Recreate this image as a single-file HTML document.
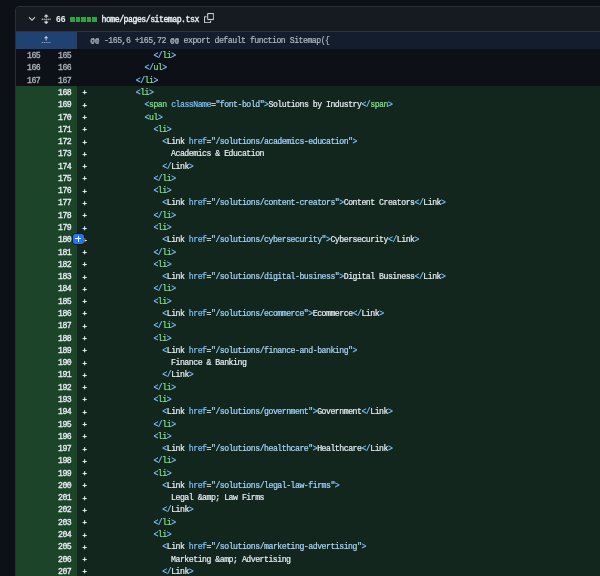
<!DOCTYPE html>
<html><head><meta charset="utf-8"><style>
html,body{margin:0;padding:0;}
body{width:600px;height:576px;overflow:hidden;background:#0d1117;position:relative;font-family:"Liberation Mono",monospace;}
.wrap{position:absolute;left:0;top:0;width:600px;height:576px;will-change:transform;overflow:hidden;}
.mono{font-size:8.2px;letter-spacing:-0.49px;-webkit-text-stroke:0.2px currentColor;}
.box{position:absolute;left:15px;top:6px;width:620px;height:620px;border:1px solid #2b3037;border-radius:4px;background:#0d1117;overflow:hidden;}
.hdr{position:absolute;left:16px;top:7px;width:600px;height:24px;background:#161b22;border-top-left-radius:3px;}
.hline{position:absolute;left:16px;top:31px;width:600px;height:1px;background:#30363d;}
.ico{position:absolute;width:9.82px;height:9.82px;}
.num66{position:absolute;left:56px;top:13px;height:12px;line-height:12px;font-family:"Liberation Sans",sans-serif;font-weight:bold;font-size:8.6px;color:#e6edf3;}
.sq{position:absolute;top:16.5px;width:4.8px;height:5px;background:#2ba441;}
.fname{position:absolute;left:101.5px;top:14.2px;height:12px;line-height:12px;font-size:8.2px;letter-spacing:-0.49px;-webkit-text-stroke:0.4px currentColor;color:#e6edf3;white-space:pre;}
.at{font-size:7px;letter-spacing:0.23px;}
.hunkg{position:absolute;left:16px;top:32px;width:61.4px;height:17.1px;background:#1f4273;}
.hunkc{position:absolute;left:77.4px;top:32px;width:600px;height:17.1px;background:#131d2e;}
.hunkt{position:absolute;left:90.6px;top:32.4px;height:17.1px;line-height:17.1px;font-size:8.2px;letter-spacing:-0.49px;-webkit-text-stroke:0.2px currentColor;color:#b1b8c0;white-space:pre;}
.row{position:absolute;left:16px;width:600px;height:12.28px;line-height:12.28px;font-size:8.2px;letter-spacing:-0.49px;-webkit-text-stroke:0.2px currentColor;white-space:pre;transform:translateY(1.0px);}
.row .n1,.row .n2{position:absolute;top:0;height:12.28px;text-align:right;-webkit-text-stroke:0.35px currentColor;}
.row .n1{left:0;width:24.3px;}
.row .n2{left:30.7px;width:24.6px;}
.row .code{position:absolute;left:61.4px;top:0;width:540px;height:12.28px;padding-left:14.1px;box-sizing:border-box;color:#e6edf3;}
.ctx{}
.ctx .n1,.ctx .n2{color:#aab1b9;}
.add .g{display:none;}
.addg{position:absolute;left:16px;top:85.94px;width:61.4px;height:500px;background:#1c4428;}
.addc{position:absolute;left:77.4px;top:85.94px;width:600px;height:500px;background:#12261e;}
.add .n2{color:#e6edf3;}

.mk{position:absolute;left:5.2px;top:0.5px;font-size:7.2px;color:#e6edf3;-webkit-text-stroke:0.45px currentColor;}
.p{color:#79c0ff;}
.t{color:#7ee787;}
.c{color:#e6edf3;}
.a{color:#79c0ff;}
.s{color:#a5d6ff;}
.plusbtn{position:absolute;left:72.7px;top:233.6px;width:11px;height:10.9px;border-radius:2.5px;background:#2476f0;box-shadow:0 0 0 0.8px rgba(5,10,8,0.7);}
.plusbtn:before{content:"";position:absolute;left:2.5px;top:4.8px;width:5.8px;height:0.9px;background:#fff;}
.plusbtn:after{content:"";position:absolute;left:4.95px;top:2.35px;width:0.9px;height:5.8px;background:#fff;}
</style></head><body>
<div class="wrap">
<div class="box"></div>
<div class="hdr"></div>
<div class="hline"></div>
<svg class="ico" style="left:26.9px;top:13.6px;width:10px;height:10px" viewBox="0 0 16 16"><path fill="#d1d7e0" stroke="#d1d7e0" stroke-width="0.3" d="M12.78 5.22a.749.749 0 0 1 0 1.06l-4.25 4.25a.749.749 0 0 1-1.06 0L3.22 6.28a.749.749 0 0 1 .326-1.275.749.749 0 0 1 .734.215L8 8.939l3.72-3.719a.749.749 0 0 1 1.06 0Z"/></svg>
<svg class="ico" style="left:41.1px;top:13.6px;width:10.4px;height:10.4px" viewBox="0 0 16 16"><path fill="#d1d7e0" stroke="#d1d7e0" stroke-width="0.5" d="m8.177.677 2.896 2.896a.25.25 0 0 1-.177.427H8.75v1.25a.75.75 0 0 1-1.5 0V4H5.104a.25.25 0 0 1-.177-.427L7.823.677a.25.25 0 0 1 .354 0ZM7.25 10.75a.75.75 0 0 1 1.5 0V12h2.146a.25.25 0 0 1 .177.427l-2.896 2.896a.25.25 0 0 1-.354 0l-2.896-2.896A.25.25 0 0 1 5.104 12H7.25v-1.25Zm-5-2a.75.75 0 0 0 0-1.5h-.5a.75.75 0 0 0 0 1.5h.5ZM6 8a.75.75 0 0 1-.75.75h-.5a.75.75 0 0 1 0-1.5h.5A.75.75 0 0 1 6 8Zm2.25.75a.75.75 0 0 0 0-1.5h-.5a.75.75 0 0 0 0 1.5h.5ZM12 8a.75.75 0 0 1-.75.75h-.5a.75.75 0 0 1 0-1.5h.5A.75.75 0 0 1 12 8Zm2.25.75a.75.75 0 0 0 0-1.5h-.5a.75.75 0 0 0 0 1.5h.5Z"/></svg>
<div class="num66">66</div>
<div class="sq" style="left:70.1px"></div><div class="sq" style="left:75.6px"></div><div class="sq" style="left:81.1px"></div><div class="sq" style="left:86.6px"></div><div class="sq" style="left:92.1px"></div>
<div class="fname">home/pages/sitemap.tsx</div>
<svg class="ico" style="left:203.8px;top:13.2px;width:10.2px;height:10.2px" viewBox="0 0 16 16"><path fill="#c9d1d9" stroke="#c9d1d9" stroke-width="0.3" d="M0 6.75C0 5.784.784 5 1.75 5h1.5a.75.75 0 0 1 0 1.5h-1.5a.25.25 0 0 0-.25.25v7.5c0 .138.112.25.25.25h7.5a.25.25 0 0 0 .25-.25v-1.5a.75.75 0 0 1 1.5 0v1.5A1.75 1.75 0 0 1 9.25 16h-7.5A1.75 1.75 0 0 1 0 14.25ZM5 1.75C5 .784 5.784 0 6.75 0h7.5C15.216 0 16 .784 16 1.75v7.5A1.75 1.75 0 0 1 14.25 11h-7.5A1.75 1.75 0 0 1 5 9.25Zm1.75-.25a.25.25 0 0 0-.25.25v7.5c0 .138.112.25.25.25h7.5a.25.25 0 0 0 .25-.25v-7.5a.25.25 0 0 0-.25-.25Z"/></svg>
<div class="hunkg"></div>
<div class="hunkc"></div>
<svg class="ico" style="left:41.0px;top:35.0px;width:10.24px;height:10.24px" viewBox="0 0 16 16"><path fill="#c3cad4" d="M7.823 1.677 4.927 4.573A.25.25 0 0 0 5.104 5H7.25v3.236a.75.75 0 1 0 1.5 0V5h2.146a.25.25 0 0 0 .177-.427L8.177 1.677a.25.25 0 0 0-.354 0ZM13.75 11a.75.75 0 0 0 0 1.5h.5a.75.75 0 0 0 0-1.5h-.5Zm-3.75.75a.75.75 0 0 1 .75-.75h.5a.75.75 0 0 1 0 1.5h-.5a.75.75 0 0 1-.75-.75ZM7.75 11a.75.75 0 0 0 0 1.5h.5a.75.75 0 0 0 0-1.5h-.5ZM4 11.75a.75.75 0 0 1 .75-.75h.5a.75.75 0 0 1 0 1.5h-.5a.75.75 0 0 1-.75-.75ZM1.75 11a.75.75 0 0 0 0 1.5h.5a.75.75 0 0 0 0-1.5h-.5Z"/></svg>
<div class="hunkt"><span class="at">@@</span> -165,6 +165,72 <span class="at">@@</span> export default function Sitemap({</div>
<div class="addg"></div><div class="addc"></div>
<div class="row ctx" style="top:49.10px"><div class="n1">165</div><div class="n2">165</div><div class="code">              <span class="p">&lt;/</span><span class="t">li</span><span class="p">&gt;</span></div></div>
<div class="row ctx" style="top:61.38px"><div class="n1">166</div><div class="n2">166</div><div class="code">            <span class="p">&lt;/</span><span class="t">ul</span><span class="p">&gt;</span></div></div>
<div class="row ctx" style="top:73.66px"><div class="n1">167</div><div class="n2">167</div><div class="code">          <span class="p">&lt;/</span><span class="t">li</span><span class="p">&gt;</span></div></div>
<div class="row add" style="top:85.94px"><div class="g"></div><div class="n2">168</div><div class="code"><span class="mk">+</span>          <span class="p">&lt;</span><span class="t">li</span><span class="p">&gt;</span></div></div>
<div class="row add" style="top:98.22px"><div class="g"></div><div class="n2">169</div><div class="code"><span class="mk">+</span>            <span class="p">&lt;</span><span class="t">span</span> <span class="a">className</span>=<span class="s">"font-bold"</span><span class="p">&gt;</span>Solutions by Industry<span class="p">&lt;/</span><span class="t">span</span><span class="p">&gt;</span></div></div>
<div class="row add" style="top:110.50px"><div class="g"></div><div class="n2">170</div><div class="code"><span class="mk">+</span>            <span class="p">&lt;</span><span class="t">ul</span><span class="p">&gt;</span></div></div>
<div class="row add" style="top:122.78px"><div class="g"></div><div class="n2">171</div><div class="code"><span class="mk">+</span>              <span class="p">&lt;</span><span class="t">li</span><span class="p">&gt;</span></div></div>
<div class="row add" style="top:135.06px"><div class="g"></div><div class="n2">172</div><div class="code"><span class="mk">+</span>                <span class="p">&lt;</span><span class="c">Link</span> <span class="a">href</span>=<span class="s">"/solutions/academics-education"</span><span class="p">&gt;</span></div></div>
<div class="row add" style="top:147.34px"><div class="g"></div><div class="n2">173</div><div class="code"><span class="mk">+</span>                  Academics &amp; Education</div></div>
<div class="row add" style="top:159.62px"><div class="g"></div><div class="n2">174</div><div class="code"><span class="mk">+</span>                <span class="p">&lt;/</span><span class="c">Link</span><span class="p">&gt;</span></div></div>
<div class="row add" style="top:171.90px"><div class="g"></div><div class="n2">175</div><div class="code"><span class="mk">+</span>              <span class="p">&lt;/</span><span class="t">li</span><span class="p">&gt;</span></div></div>
<div class="row add" style="top:184.18px"><div class="g"></div><div class="n2">176</div><div class="code"><span class="mk">+</span>              <span class="p">&lt;</span><span class="t">li</span><span class="p">&gt;</span></div></div>
<div class="row add" style="top:196.46px"><div class="g"></div><div class="n2">177</div><div class="code"><span class="mk">+</span>                <span class="p">&lt;</span><span class="c">Link</span> <span class="a">href</span>=<span class="s">"/solutions/content-creators"</span><span class="p">&gt;</span>Content Creators<span class="p">&lt;/</span><span class="c">Link</span><span class="p">&gt;</span></div></div>
<div class="row add" style="top:208.74px"><div class="g"></div><div class="n2">178</div><div class="code"><span class="mk">+</span>              <span class="p">&lt;/</span><span class="t">li</span><span class="p">&gt;</span></div></div>
<div class="row add" style="top:221.02px"><div class="g"></div><div class="n2">179</div><div class="code"><span class="mk">+</span>              <span class="p">&lt;</span><span class="t">li</span><span class="p">&gt;</span></div></div>
<div class="row add" style="top:233.30px"><div class="g"></div><div class="n2">180</div><div class="code"><span class="mk">+</span>                <span class="p">&lt;</span><span class="c">Link</span> <span class="a">href</span>=<span class="s">"/solutions/cybersecurity"</span><span class="p">&gt;</span>Cybersecurity<span class="p">&lt;/</span><span class="c">Link</span><span class="p">&gt;</span></div></div>
<div class="row add" style="top:245.58px"><div class="g"></div><div class="n2">181</div><div class="code"><span class="mk">+</span>              <span class="p">&lt;/</span><span class="t">li</span><span class="p">&gt;</span></div></div>
<div class="row add" style="top:257.86px"><div class="g"></div><div class="n2">182</div><div class="code"><span class="mk">+</span>              <span class="p">&lt;</span><span class="t">li</span><span class="p">&gt;</span></div></div>
<div class="row add" style="top:270.14px"><div class="g"></div><div class="n2">183</div><div class="code"><span class="mk">+</span>                <span class="p">&lt;</span><span class="c">Link</span> <span class="a">href</span>=<span class="s">"/solutions/digital-business"</span><span class="p">&gt;</span>Digital Business<span class="p">&lt;/</span><span class="c">Link</span><span class="p">&gt;</span></div></div>
<div class="row add" style="top:282.42px"><div class="g"></div><div class="n2">184</div><div class="code"><span class="mk">+</span>              <span class="p">&lt;/</span><span class="t">li</span><span class="p">&gt;</span></div></div>
<div class="row add" style="top:294.70px"><div class="g"></div><div class="n2">185</div><div class="code"><span class="mk">+</span>              <span class="p">&lt;</span><span class="t">li</span><span class="p">&gt;</span></div></div>
<div class="row add" style="top:306.98px"><div class="g"></div><div class="n2">186</div><div class="code"><span class="mk">+</span>                <span class="p">&lt;</span><span class="c">Link</span> <span class="a">href</span>=<span class="s">"/solutions/ecommerce"</span><span class="p">&gt;</span>Ecommerce<span class="p">&lt;/</span><span class="c">Link</span><span class="p">&gt;</span></div></div>
<div class="row add" style="top:319.26px"><div class="g"></div><div class="n2">187</div><div class="code"><span class="mk">+</span>              <span class="p">&lt;/</span><span class="t">li</span><span class="p">&gt;</span></div></div>
<div class="row add" style="top:331.54px"><div class="g"></div><div class="n2">188</div><div class="code"><span class="mk">+</span>              <span class="p">&lt;</span><span class="t">li</span><span class="p">&gt;</span></div></div>
<div class="row add" style="top:343.82px"><div class="g"></div><div class="n2">189</div><div class="code"><span class="mk">+</span>                <span class="p">&lt;</span><span class="c">Link</span> <span class="a">href</span>=<span class="s">"/solutions/finance-and-banking"</span><span class="p">&gt;</span></div></div>
<div class="row add" style="top:356.10px"><div class="g"></div><div class="n2">190</div><div class="code"><span class="mk">+</span>                  Finance &amp; Banking</div></div>
<div class="row add" style="top:368.38px"><div class="g"></div><div class="n2">191</div><div class="code"><span class="mk">+</span>                <span class="p">&lt;/</span><span class="c">Link</span><span class="p">&gt;</span></div></div>
<div class="row add" style="top:380.66px"><div class="g"></div><div class="n2">192</div><div class="code"><span class="mk">+</span>              <span class="p">&lt;/</span><span class="t">li</span><span class="p">&gt;</span></div></div>
<div class="row add" style="top:392.94px"><div class="g"></div><div class="n2">193</div><div class="code"><span class="mk">+</span>              <span class="p">&lt;</span><span class="t">li</span><span class="p">&gt;</span></div></div>
<div class="row add" style="top:405.22px"><div class="g"></div><div class="n2">194</div><div class="code"><span class="mk">+</span>                <span class="p">&lt;</span><span class="c">Link</span> <span class="a">href</span>=<span class="s">"/solutions/government"</span><span class="p">&gt;</span>Government<span class="p">&lt;/</span><span class="c">Link</span><span class="p">&gt;</span></div></div>
<div class="row add" style="top:417.50px"><div class="g"></div><div class="n2">195</div><div class="code"><span class="mk">+</span>              <span class="p">&lt;/</span><span class="t">li</span><span class="p">&gt;</span></div></div>
<div class="row add" style="top:429.78px"><div class="g"></div><div class="n2">196</div><div class="code"><span class="mk">+</span>              <span class="p">&lt;</span><span class="t">li</span><span class="p">&gt;</span></div></div>
<div class="row add" style="top:442.06px"><div class="g"></div><div class="n2">197</div><div class="code"><span class="mk">+</span>                <span class="p">&lt;</span><span class="c">Link</span> <span class="a">href</span>=<span class="s">"/solutions/healthcare"</span><span class="p">&gt;</span>Healthcare<span class="p">&lt;/</span><span class="c">Link</span><span class="p">&gt;</span></div></div>
<div class="row add" style="top:454.34px"><div class="g"></div><div class="n2">198</div><div class="code"><span class="mk">+</span>              <span class="p">&lt;/</span><span class="t">li</span><span class="p">&gt;</span></div></div>
<div class="row add" style="top:466.62px"><div class="g"></div><div class="n2">199</div><div class="code"><span class="mk">+</span>              <span class="p">&lt;</span><span class="t">li</span><span class="p">&gt;</span></div></div>
<div class="row add" style="top:478.90px"><div class="g"></div><div class="n2">200</div><div class="code"><span class="mk">+</span>                <span class="p">&lt;</span><span class="c">Link</span> <span class="a">href</span>=<span class="s">"/solutions/legal-law-firms"</span><span class="p">&gt;</span></div></div>
<div class="row add" style="top:491.18px"><div class="g"></div><div class="n2">201</div><div class="code"><span class="mk">+</span>                  Legal &amp;amp; Law Firms</div></div>
<div class="row add" style="top:503.46px"><div class="g"></div><div class="n2">202</div><div class="code"><span class="mk">+</span>                <span class="p">&lt;/</span><span class="c">Link</span><span class="p">&gt;</span></div></div>
<div class="row add" style="top:515.74px"><div class="g"></div><div class="n2">203</div><div class="code"><span class="mk">+</span>              <span class="p">&lt;/</span><span class="t">li</span><span class="p">&gt;</span></div></div>
<div class="row add" style="top:528.02px"><div class="g"></div><div class="n2">204</div><div class="code"><span class="mk">+</span>              <span class="p">&lt;</span><span class="t">li</span><span class="p">&gt;</span></div></div>
<div class="row add" style="top:540.30px"><div class="g"></div><div class="n2">205</div><div class="code"><span class="mk">+</span>                <span class="p">&lt;</span><span class="c">Link</span> <span class="a">href</span>=<span class="s">"/solutions/marketing-advertising"</span><span class="p">&gt;</span></div></div>
<div class="row add" style="top:552.58px"><div class="g"></div><div class="n2">206</div><div class="code"><span class="mk">+</span>                  Marketing &amp;amp; Advertising</div></div>
<div class="row add" style="top:564.86px"><div class="g"></div><div class="n2">207</div><div class="code"><span class="mk">+</span>                <span class="p">&lt;/</span><span class="c">Link</span><span class="p">&gt;</span></div></div>
<div class="plusbtn"></div>
</div>
</body></html>
